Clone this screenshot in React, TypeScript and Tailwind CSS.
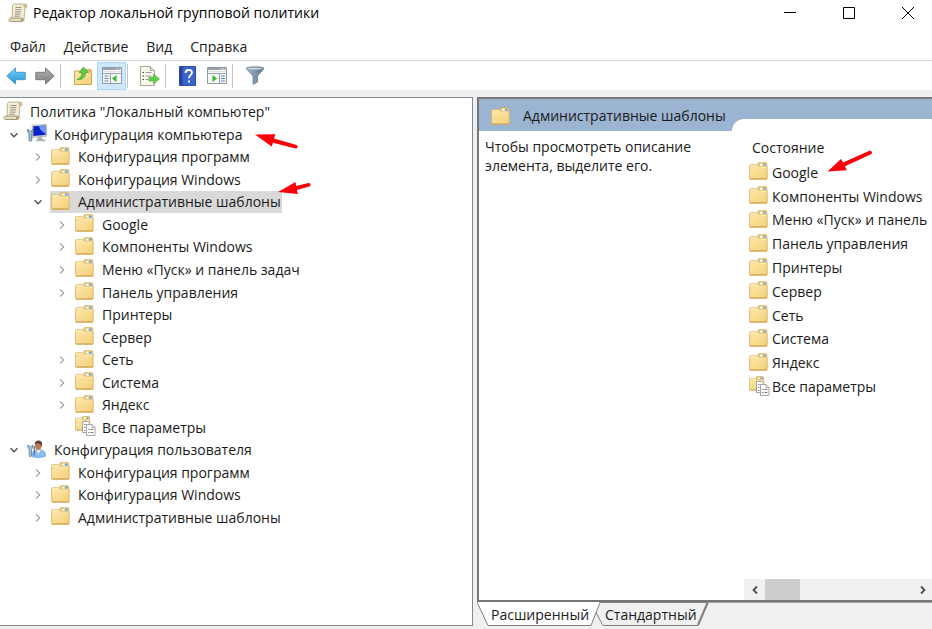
import React, { useState } from "react";

type IconKind = "scroll" | "computer" | "user" | "folder" | "all";

function ScrollIcon() {
  return (
    <svg width="20" height="20" viewBox="0 0 20 20" aria-hidden="true">
      <path d="M4.500 2.500C5 1 6 1 7 1h10c1.600 0 2 1.200 2 2.200s-.6 1.800-2 1.800l-1 11H4z" fill="#f3edd6" stroke="#b5aa8c" strokeWidth=".9" />
      <path d="M16 1.200c-1.200.8-.8 3.400.6 3.700 1.600 0 2.300-.7 2.300-1.800 0-1-.7-2-2.900-1.900z" fill="#c9bb92" />
      <path d="M1 17c0-1.300.8-1.900 2-1.900h11c-.9.800-.8 2.900.5 3.400H3c-1.200 0-2-.5-2-1.500z" fill="#e8dfbd" stroke="#9a8f6e" strokeWidth=".9" />
      <path d="M14 15.100c1.700-.2 2.500.6 2.500 1.700s-.8 1.700-2 1.700c-1.100-.5-1.200-2.500-.5-3.400z" fill="#b3a57c" />
      <path d="M7.500 4.500h6M7.200 6.700h6M7 8.900h6M6.800 11.100h6M6.500 13.200h5" stroke="#8f8a78" strokeWidth=".9" />
    </svg>
  );
}

function FolderShape() {
  return (
    <>
      <path d="M9 4.500V1.600c0-.6.3-.9.900-.9h7c.6 0 .9.3.9.900V6H9z" fill="#f1cd72" stroke="#cfa850" strokeWidth=".8" />
      <path d="M11 1.700h5.500v2H11z" fill="#fff" />
      <path d="M13.800 1.700h2.700v1.900h-2.700z" fill="#4a9fe0" />
      <path d="M.6 3.500c0-.5.3-.8.8-.8h6.300l1.600 1.600h8c.6 0 .9.300.9.900v11.200c0 .6-.3.9-.9.9H1.500c-.6 0-.9-.3-.9-.9z" fill="url(#folderFill)" stroke="#d6ae5e" strokeWidth=".8" />
      <path d="M1.300 3.500h6.100l1.600 1.600h8.400" stroke="#fff3cc" strokeWidth=".7" fill="none" />
      <path d="M1 16.900h16.800" stroke="#c89b48" strokeWidth=".8" />
    </>
  );
}

function FolderIcon() {
  return (
    <svg width="19" height="18" viewBox="0 0 19 18" aria-hidden="true">
      <FolderShape />
    </svg>
  );
}

function AllSettingsIcon() {
  return (
    <svg width="21" height="20" viewBox="0 0 21 20" aria-hidden="true">
      <g transform="scale(.82)">
        <FolderShape />
      </g>
      <path d="M7.500 5.500h5l2 2v9h-7z" fill="#fff" stroke="#9a9a9a" strokeWidth=".9" />
      <path d="M9 8.500h1.500M9 11.500h1.500M9 14.500h1.500" stroke="#808080" />
      <path d="M11.500 8.500h5.500l3 3v7.900h-8.500z" fill="#fff" stroke="#9a9a9a" strokeWidth=".9" />
      <path d="M17 8.500v3h3" fill="none" stroke="#9a9a9a" strokeWidth=".8" />
      <path d="M13.200 13.500h1.300M13.200 16.500h1.300M15.700 13.500h2.600M15.700 16.500h2.600" stroke="#707070" />
    </svg>
  );
}

function ComputerIcon() {
  return (
    <svg width="20" height="18" viewBox="0 0 20 18" aria-hidden="true">
      <path d="M5.200 1.300L19.500.5v11.800l-14.300.9z" fill="#dfe2e3" stroke="#9aa4a8" strokeWidth=".7" />
      <path d="M6.300 2.300l12.200-.7v9.500l-12.200.8z" fill="#0b20c8" />
      <path d="M12 2l6.500-.4v7.600c-3.500-1-5.700-3.600-6.500-7.200z" fill="#6c9cf5" />
      <path d="M10.500 12.800h4.500l.5 2.200 3 1v1.300H9V16l1.500-1z" fill="#aeb3b6" />
      <path d="M.7 5v3.200L2 9.500v6.300c0 2 2.800 2 2.800 0V9.500l1.300-1.300V5L4.700 7H2.200z" fill="#9fc0d4" stroke="#4f7389" strokeWidth=".8" />
    </svg>
  );
}

function UserIcon() {
  return (
    <svg width="20" height="18" viewBox="0 0 20 18" aria-hidden="true">
      <path d="M5 16.500c0-5 2.500-7 6.500-7s7.200 2 7.200 6.400c-3.700 2-10 2-13.700.6z" fill="#8abcec" stroke="#5c93c8" strokeWidth=".6" />
      <path d="M9 9.800l2.500 4 2.500-4.100z" fill="#e9f3fb" />
      <ellipse cx="11.300" cy="5.600" rx="3.300" ry="4.400" fill="#bd7b4d" />
      <path d="M7.700 4.500C7.700 1.600 9.300.4 11.500.4c2.500 0 4 1.600 3.600 4.800l-.8 1.500c-.3-2.100-1-3-2.600-3.100-1.800-.1-2.600.3-4 .9z" fill="#55423a" />
      <path d="M.9 4.900v3l1.300 1.200v6.500c0 1.600 2.300 1.600 2.300 0V9.100l1.300-1.200v-3L4.400 6.700h-2z" fill="#a9c4d4" stroke="#4f7088" strokeWidth=".7" />
      <path d="M7.200 6v9.500" stroke="#3f73ad" strokeWidth="1.200" />
    </svg>
  );
}

function ItemIcon({ kind }: { kind: IconKind }) {
  if (kind === "scroll") return <ScrollIcon />;
  if (kind === "computer") return <ComputerIcon />;
  if (kind === "user") return <UserIcon />;
  if (kind === "all") return <AllSettingsIcon />;
  return <FolderIcon />;
}

function Chevron({ open }: { open: boolean }) {
  return (
    <svg width="10" height="10" viewBox="0 0 10 10" fill="none" aria-hidden="true">
      {open ? (
        <path d="M1.500 3.200L5 6.700l3.500-3.500" stroke="#505050" strokeWidth="1.400" />
      ) : (
        <path d="M3.200 1.500L6.700 5 3.200 8.500" stroke="#a6a6a6" strokeWidth="1.300" />
      )}
    </svg>
  );
}

type Node = { level: 0 | 1 | 2 | 3; label: string; icon: IconKind; state?: "open" | "closed" };

const TREE: Node[] = [
  { level: 0, label: 'Политика "Локальный компьютер"', icon: "scroll" },
  { level: 1, label: "Конфигурация компьютера", icon: "computer", state: "open" },
  { level: 2, label: "Конфигурация программ", icon: "folder", state: "closed" },
  { level: 2, label: "Конфигурация Windows", icon: "folder", state: "closed" },
  { level: 2, label: "Административные шаблоны", icon: "folder", state: "open" },
  { level: 3, label: "Google", icon: "folder", state: "closed" },
  { level: 3, label: "Компоненты Windows", icon: "folder", state: "closed" },
  { level: 3, label: "Меню «Пуск» и панель задач", icon: "folder", state: "closed" },
  { level: 3, label: "Панель управления", icon: "folder", state: "closed" },
  { level: 3, label: "Принтеры", icon: "folder" },
  { level: 3, label: "Сервер", icon: "folder" },
  { level: 3, label: "Сеть", icon: "folder", state: "closed" },
  { level: 3, label: "Система", icon: "folder", state: "closed" },
  { level: 3, label: "Яндекс", icon: "folder", state: "closed" },
  { level: 3, label: "Все параметры", icon: "all" },
  { level: 1, label: "Конфигурация пользователя", icon: "user", state: "open" },
  { level: 2, label: "Конфигурация программ", icon: "folder", state: "closed" },
  { level: 2, label: "Конфигурация Windows", icon: "folder", state: "closed" },
  { level: 2, label: "Административные шаблоны", icon: "folder", state: "closed" },
];

const INDENT = { 0: "pl-1", 1: "pl-1", 2: "pl-7", 3: "pl-13" };

const ITEMS: { label: string; icon: IconKind }[] = [
  { label: "Google", icon: "folder" },
  { label: "Компоненты Windows", icon: "folder" },
  { label: "Меню «Пуск» и панель", icon: "folder" },
  { label: "Панель управления", icon: "folder" },
  { label: "Принтеры", icon: "folder" },
  { label: "Сервер", icon: "folder" },
  { label: "Сеть", icon: "folder" },
  { label: "Система", icon: "folder" },
  { label: "Яндекс", icon: "folder" },
  { label: "Все параметры", icon: "all" },
];

const CAPTION_BUTTON = "flex h-[26px] w-12 items-center justify-center";

function TitleBar() {
  return (
    <header className="flex h-[26px] shrink-0 items-center pl-2">
      <ScrollIcon />
      <h1 className="ml-[5px] flex-1 text-[14px] text-black">Редактор локальной групповой политики</h1>
      <div className="flex gap-[11px]">
        <button aria-label="Свернуть" className={CAPTION_BUTTON}>
          <svg width="12" height="12"><path d="M0 5.500h12" stroke="#000" /></svg>
        </button>
        <button aria-label="Развернуть" className={CAPTION_BUTTON}>
          <svg width="12" height="12" fill="none"><path d="M.5.500h11v11H.5z" stroke="#000" /></svg>
        </button>
        <button aria-label="Закрыть" className={CAPTION_BUTTON}>
          <svg width="12" height="12"><path d="M0 0l12 12M12 0L0 12" stroke="#000" /></svg>
        </button>
      </div>
    </header>
  );
}

function MenuBar() {
  return (
    <nav className="flex h-[35px] shrink-0 items-center gap-[18px] border-b border-[#d2d2d2] pt-[7px] pl-[10px]">
      {["Файл", "Действие", "Вид", "Справка"].map((m) => (
        <button key={m}>{m}</button>
      ))}
    </nav>
  );
}

function Divider() {
  return <span className="mr-[7px] ml-px h-6 w-px bg-[#c3c3c3]" />;
}

const TOOL = "flex h-[26px] w-[29px] items-center justify-center";

function WindowGlyph({ side }: { side: "left" | "right" }) {
  return (
    <svg width="20" height="17" viewBox="0 0 20 17" aria-hidden="true">
      <path d="M.5.500h19v16H.5z" fill="#f7f8f8" stroke="#9299a1" />
      <path d="M1 1h18v2H1z" fill="#9aa1ab" />
      <path d="M14 2h1M16 2h1M18 2h1" stroke="#fff" />
      <path d="M1 4.500h18" stroke="#dfe2e6" />
      <path d="M1 6.500h18" stroke="#9aa1ab" />
      {side === "left" ? (
        <>
          <path d="M8.500 7v9" stroke="#9299a1" />
          <path d="M2.500 9h4M2.500 11.500h4M2.500 14h4" stroke="#4f86c0" />
          <path d="M14.500 8v7l-4.500-3.500z" fill="#36b92f" />
        </>
      ) : (
        <>
          <path d="M12.500 7v9" stroke="#9299a1" />
          <path d="M14 9h4M14 11.500h4M14 14h4" stroke="#4f86c0" />
          <path d="M5.500 8v7l4.500-3.500z" fill="#36b92f" />
        </>
      )}
    </svg>
  );
}

function ToolBar() {
  return (
    <div role="toolbar" className="flex h-[29px] shrink-0 items-center pl-px">
      <button aria-label="Назад" className={TOOL}>
        <svg width="20" height="18" viewBox="0 0 20 18">
          <path d="M.8 9L9.500 1v4.300h9.700v7.400H9.500V17z" fill="url(#backFill)" stroke="#4a9bcb" />
        </svg>
      </button>
      <button aria-label="Вперёд" className={TOOL}>
        <svg width="20" height="18" viewBox="0 0 20 18">
          <path d="M19.200 9L10.500 1v4.300H.8v7.400h9.700V17z" fill="url(#fwdFill)" stroke="#7d7d7d" />
        </svg>
      </button>
      <Divider />
      <button aria-label="На уровень вверх" className={TOOL}>
        <svg width="20" height="20" viewBox="0 0 20 20">
          <path d="M10 6V3.500h8V7z" fill="#efc968" stroke="#cfa850" strokeWidth=".8" />
          <path d="M1.500 5h17v13.500h-17z" fill="url(#folderFill)" stroke="#cfa450" />
          <path d="M4 13.500C7.500 12 9 9.500 8.800 6.500H6L10.500 1l5 5.500h-3C12.500 11 9.500 14.500 4 13.500z" fill="#5fcc46" stroke="#3fa531" strokeWidth=".7" />
        </svg>
      </button>
      <button aria-label="Дерево консоли" aria-pressed="true" className="flex h-7 w-[29px] items-center justify-center border border-[#a9d6fb] bg-[#cce8ff]">
        <WindowGlyph side="left" />
      </button>
      <Divider />
      <button aria-label="Экспорт списка" className={TOOL}>
        <svg width="21" height="20" viewBox="0 0 21 20">
          <path d="M1.500.500h10l4 4v15h-14z" fill="#fbf8e8" stroke="#a9a9a2" />
          <path d="M11.500.500v4h4" fill="#ddd" stroke="#a9a9a2" />
          <path d="M3.500 6.500h1.500M3.500 10h1.500M3.500 13.500h1.500" stroke="#444" />
          <path d="M6.500 6.500h6M6.500 10h5M6.500 13.500h3" stroke="#9a90b8" />
          <path d="M10 11h4.500V8l6 5-6 5v-3H10z" fill="#5dcb4b" stroke="#4bb03c" strokeWidth=".6" />
        </svg>
      </button>
      <Divider />
      <button aria-label="Справка" className={TOOL}>
        <svg width="17" height="20" viewBox="0 0 17 20">
          <path d="M.5.500h16v19H.5z" fill="#3b63c9" stroke="#2a4ba6" />
          <path d="M1 1h2.500v18H1z" fill="#2444a0" />
          <path d="M6.500 7c0-4 6.500-4 6.500-.4 0 2.500-3 2.700-3 5.600M10 14.500v2" fill="none" stroke="#fff" strokeWidth="1.900" />
        </svg>
      </button>
      <button aria-label="Панель действий" className={TOOL}>
        <WindowGlyph side="right" />
      </button>
      <Divider />
      <button aria-label="Фильтр" className={TOOL}>
        <svg width="20" height="19" viewBox="0 0 20 19">
          <path d="M1 2.500C1 .3 19 .3 19 2.500L12.500 10v6L8 18.500V10z" fill="url(#filterFill)" stroke="#6f8496" strokeWidth=".8" />
          <ellipse cx="10" cy="2.600" rx="7.500" ry="1" fill="#c9d8e3" />
        </svg>
      </button>
    </div>
  );
}

function TreePane() {
  const [selected, setSelected] = useState(4);
  return (
    <section className="w-[473px] shrink-0 overflow-hidden border-t border-r border-b border-[#828790] bg-white pt-[3px]">
      <ul role="tree" className="flex h-[428px] flex-col">
        {TREE.map((n, i) => (
          <li key={i} role="treeitem" aria-level={n.level + 1} aria-selected={i === selected} className={`flex flex-1 items-center ${INDENT[n.level]}`}>
            {n.level > 0 && (
              <span className="mr-1 flex w-5 justify-center">
                {n.state && (
                  <button aria-label={n.label}>
                    <Chevron open={n.state === "open"} />
                  </button>
                )}
              </span>
            )}
            <button onClick={() => setSelected(i)} className={`-ml-[2px] flex h-[22px] items-center pr-px pl-px ${i === selected ? "bg-[#d9d9d9]" : ""}`}>
              <span className="flex w-[27px] items-center pb-[3px]">
                <ItemIcon kind={n.icon} />
              </span>
              <span className="whitespace-nowrap">{n.label}</span>
            </button>
          </li>
        ))}
      </ul>
    </section>
  );
}

function ListPane() {
  return (
    <div className="flex min-w-0 flex-1 border-t-2 border-b-2 border-l-2 border-[#767676] bg-white">
      <div className="w-[253px] shrink-0">
        <div className="flex h-8 items-center gap-[13px] bg-[#9ab4d1] pt-px pl-3">
          <FolderIcon />
          <h2 className="whitespace-nowrap">Административные шаблоны</h2>
        </div>
        <p className="px-[6px] pt-[6px] leading-[19px]">Чтобы просмотреть описание элемента, выделите его.</p>
      </div>
      <div className="flex min-w-0 flex-1 flex-col bg-[#9ab4d1] pt-5">
        <div className="flex flex-1 flex-col overflow-hidden rounded-tl-[12px] bg-white pl-3">
          <div className="mt-[15px] flex h-[27px] items-center pl-2">Состояние</div>
          <ul className="flex h-[238px] flex-col pl-[5px]">
            {ITEMS.map((it) => (
              <li key={it.label} className="flex flex-1 items-center whitespace-nowrap">
                <span className="w-[23px] shrink-0 pb-[3px]">
                  <ItemIcon kind={it.icon} />
                </span>
                {it.label}
              </li>
            ))}
          </ul>
          <div className="mt-auto flex h-[21px] bg-[#f0f0f0]">
            <button aria-label="Прокрутить влево" className="flex w-[21px] items-center justify-center">
              <svg width="10" height="10" fill="none"><path d="M7 1.500L3.500 5 7 8.500" stroke="#505050" strokeWidth="1.800" /></svg>
            </button>
            <span className="w-[35px] bg-[#cdcdcd]" />
            <span className="flex-1" />
            <button aria-label="Прокрутить вправо" className="flex w-[18px] items-center justify-center">
              <svg width="10" height="10" fill="none"><path d="M3 1.500L6.500 5 3 8.500" stroke="#505050" strokeWidth="1.800" /></svg>
            </button>
          </div>
        </div>
      </div>
    </div>
  );
}

function ViewTabs() {
  return (
    <div role="tablist" className="relative flex h-6 shrink-0 items-center border-t border-[#a0a0a0] pl-[14px]">
      <svg className="absolute -top-px left-0" width="240" height="24" fill="none" aria-hidden="true">
        <path d="M0 0h123l-9 23H11z" fill="#fff" />
        <path d="M0 0l11 23.500h103L123 .5h108l-10 23H126l-7-13" stroke="#808080" />
        <path d="M230.500 1l-9.500 22" stroke="#808080" strokeWidth="2" />
      </svg>
      <button role="tab" aria-selected="true" className="relative w-[114px] text-left">Расширенный</button>
      <button role="tab" aria-selected="false" className="relative">Стандартный</button>
    </div>
  );
}

function RisingArrow({ className }: { className: string }) {
  return (
    <svg className={`pointer-events-none absolute ${className}`} width="46" height="24" viewBox="0 0 46 24" aria-hidden="true">
      <path d="M.5 21.500L14 9l2 3.600L42.500.8c2-.6 3.500 2.200 1.500 3.400L18 16.300l1.800 4z" fill="#fb0007" />
    </svg>
  );
}

export default function App() {
  return (
    <div className="relative flex h-screen min-h-[560px] flex-col overflow-hidden bg-white font-['Open_Sans','Noto_Sans',sans-serif] text-[14px] leading-5 text-[#1a1a1a]">
      <svg className="absolute" width="0" height="0" aria-hidden="true">
        <defs>
          <linearGradient id="folderFill" x1="0" y1="0" x2="1" y2="1">
            <stop offset="0" stopColor="#fde8ac" />
            <stop offset="1" stopColor="#f5cf78" />
          </linearGradient>
          <linearGradient id="backFill" x1="0" y1="0" x2="0" y2="1">
            <stop offset="0" stopColor="#7fd0f7" />
            <stop offset="1" stopColor="#1c95dc" />
          </linearGradient>
          <linearGradient id="fwdFill" x1="0" y1="0" x2="0" y2="1">
            <stop offset="0" stopColor="#b0b0b0" />
            <stop offset="1" stopColor="#808080" />
          </linearGradient>
          <linearGradient id="filterFill" x1="0" y1="0" x2="1" y2="0">
            <stop offset="0" stopColor="#a9bccb" />
            <stop offset="1" stopColor="#587086" />
          </linearGradient>
        </defs>
      </svg>
      <TitleBar />
      <MenuBar />
      <ToolBar />
      <main className="flex min-h-0 flex-1 gap-1 bg-[#f0f0f0] pt-[7px] pb-[3px]">
        <TreePane />
        <section className="flex min-w-0 flex-1 flex-col">
          <ListPane />
          <ViewTabs />
        </section>
      </main>
      <svg className="pointer-events-none absolute top-[133px] left-[254px]" width="46" height="18" viewBox="0 0 46 18" aria-hidden="true">
        <path d="M1 1.500l20.500-.2-1.500 4.300 22.500 6.500c2 .9 1.300 4-1 3.400L19 9.800l-1.300 3.700z" fill="#fb0007" />
      </svg>
      <svg className="pointer-events-none absolute top-[180px] left-[277px]" width="36" height="16" viewBox="0 0 36 16" aria-hidden="true">
        <path d="M1 12L18.500 2l.7 4 12.300-3c2.200-.3 2.900 2.900.7 3.600l-12.300 3.500.9 3.900z" fill="#fb0007" />
      </svg>
      <RisingArrow className="top-[150px] left-[827px]" />
    </div>
  );
}
